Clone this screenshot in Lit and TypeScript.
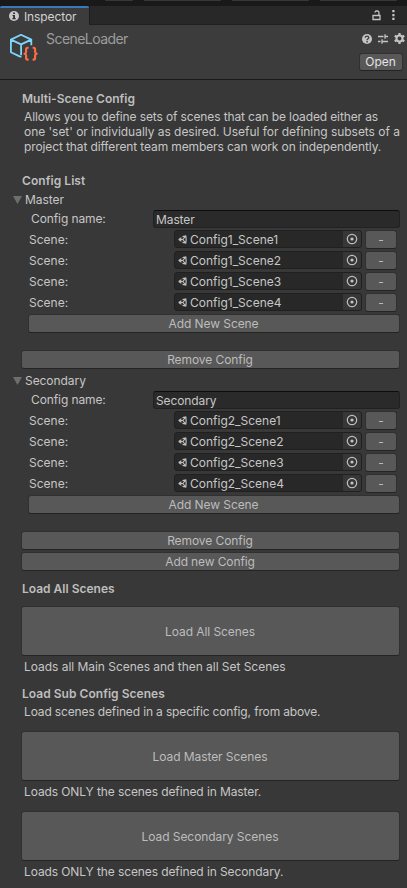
import { LitElement, html, css, svg } from "lit";
import { customElement, property } from "lit/decorators.js";

const infoIcon = html`<svg width="10" height="10" viewBox="0 0 10 10"><circle cx="5" cy="5" r="5" fill="#c8c8c8"/><path d="M4.1 1.6h1.9v1.5H4.1zM3.5 4h2.5v3h.7v1.2H3.4V7h.7V5.1h-.6z" fill="#333"/></svg>`;

const lockIcon = html`<svg width="9" height="11" viewBox="0 0 9 11"><path d="M1 5.5h7v4H1zM6.9 5.3V2.6Q6.9 1 5.4 1H4.5Q3 1 3 2.6" fill="none" stroke="#c4c4c4" stroke-width="1.3"/></svg>`;

const dotsIcon = html`<svg width="3" height="10" viewBox="0 0 3 10"><path d="M.3 0h2.2v2.2H.3zM.3 4h2.2v2.2H.3zM.3 7.8h2.2V10H.3z" fill="#c8c8c8"/></svg>`;

const helpIcon = html`<svg width="10" height="10" viewBox="0 0 10 10"><circle cx="5" cy="5" r="5" fill="#c4c4c4"/><path d="M3.2 3.8Q3.3 2.2 5 2.2T6.8 3.7C6.8 4.8 5.1 4.8 5.1 6.2" fill="none" stroke="#3c3c3c" stroke-width="1.3"/><path d="M4.4 7.1h1.4v1.3H4.4z" fill="#3c3c3c"/></svg>`;

const presetIcon = html`<svg width="10" height="10" viewBox="0 0 10 10"><path d="M0 2.5h5.5M7 2.5h3M7 .3v4.4M0 7.5h2.5M4.5 7.5H10M4 5.3v4.4" fill="none" stroke="#c4c4c4" stroke-width="1.3"/></svg>`;

const gearIcon = html`<svg width="11" height="11" viewBox="0 0 11 11"><circle cx="5.5" cy="5.5" r="3" fill="none" stroke="#c4c4c4" stroke-width="2"/>${[0, 60, 120].map(
  (a) => svg`<path d="M4.4 0h2.2v2.4H4.4zM4.4 8.6h2.2V11H4.4z" fill="#c4c4c4" transform="rotate(${a} 5.5 5.5)"/>`
)}</svg>`;

const assetIcon = html`<svg width="32" height="31" viewBox="0 0 32 31"><g fill="none" stroke-linejoin="round"><path d="M13.4 26L11.6 25.4 2.9 21.2V8.6L13 3.8l10.3 4.8v5.6M2.9 8.6l10.2 4.8 10.2-4.8M13.1 13.4v10.8" stroke="#7fd6fd" stroke-width="1.8"/><path d="M20.6 16.8h-1q-1.5 0-1.5 1.5v2.6q0 1.3-1.6 1.8 1.6.5 1.6 1.8v2.6q0 1.5 1.5 1.5h1M24.6 16.8h1q1.5 0 1.5 1.5v2.6q0 1.3 1.6 1.8-1.6.5-1.6 1.8v2.6q0 1.5-1.5 1.5h-1" stroke="#ff6e40" stroke-width="2.1"/></g></svg>`;

const sceneIcon = html`<svg width="9" height="9" viewBox="0 0 9 9"><path d="M.8 4.5L3.4 2.7M.8 4.5L3.4 6.3M.5 4.5H4.8M4.8 4.5L7.4 1.4M4.8 4.5L7.4 7.6M4.5 1.6L7.8.9 8.1 3.6M4.5 7.4L7.8 8.1 8.1 5.4M8.1 3.4v2.2" fill="none" stroke="#c0c0c0" stroke-width="1.15"/></svg>`;

const pickerIcon = html`<svg width="12" height="12" viewBox="0 0 12 12"><circle cx="6" cy="6" r="4.7" fill="none" stroke="#bdbdbd" stroke-width="1.2"/><circle cx="6" cy="6" r="1.6" fill="#c4c4c4"/></svg>`;

@customElement("unity-button")
class UnityButton extends LitElement {
  static styles = css`
    :host {
      display: flex;
      box-sizing: border-box;
      height: 19px;
      align-items: center;
      justify-content: center;
      padding-right: 1px;
      background: #585858;
      border: 1px solid #303030;
      border-bottom-color: #242424;
      border-radius: 3px;
      color: #bcbcbc;
      line-height: 15px;
      letter-spacing: -0.07px;
    }
  `;
  render() {
    return html`<slot></slot>`;
  }
}

@customElement("scene-row")
class SceneRow extends LitElement {
  @property() name = "";
  static styles = css`
    :host {
      display: grid;
      grid-template-columns: 145px 188px 35px;
      height: 19px;
      margin-bottom: 2px;
    }
    .label { line-height: 19px; }
    .field {
      display: flex;
      box-sizing: border-box;
      height: 18px;
      align-items: center;
      background: #282828;
      border: 1px solid #202020;
      border-radius: 3px;
      padding-left: 3px;
      overflow: hidden;
    }
    .name { flex: 1; padding-left: 3px; line-height: 18px; margin-top: 1px; }
    .pick {
      display: flex;
      width: 18px;
      height: 16px;
      align-items: center;
      justify-content: center;
      background: #373737;
    }
    .remove { margin-left: 3px; padding-right: 0; }
    svg { display: block; }
  `;
  render() {
    return html`
      <span class="label">Scene:</span>
      <div class="field">
        ${sceneIcon}<span class="name">${this.name}</span><span class="pick">${pickerIcon}</span>
      </div>
      <unity-button class="remove">-</unity-button>
    `;
  }
}

@customElement("config-group")
class ConfigGroup extends LitElement {
  @property() name = "";
  @property({ attribute: false }) scenes: string[] = [];
  static styles = css`
    :host { display: block; }
    .fold { display: flex; align-items: flex-start; height: 17px; padding-top: 1px; margin-left: 13px; gap: 3px; letter-spacing: -0.06px; }
    .fold svg { display: block; margin-top: 4px; }
    .config {
      display: grid;
      grid-template-columns: 122px 247px;
      margin: 1px 0 2px 31px;
      height: 18px;
      line-height: 17px;
      letter-spacing: -0.1px;
    }
    .input {
      box-sizing: border-box;
      height: 18px;
      padding-left: 2px;
      background: #2a2a2a;
      border: 1px solid #212121;
      border-top-color: #0d0d0d;
      border-radius: 3px;
    }
    .scenes { margin-left: 28px; width: 372px; }
    .scenes scene-row { margin-left: 1px; }
    .remove { margin: 17px 7px 0 21px; }
  `;
  render() {
    return html`
      <div class="fold">
        <svg width="9" height="8" viewBox="0 0 9 8"><path d="M0 0h9L4.5 8z" fill="#6e6e6e"/></svg>
        <span>${this.name}</span>
      </div>
      <div class="config"><span>Config name:</span><div class="input">${this.name}</div></div>
      <div class="scenes">
        ${this.scenes.map((s) => html`<scene-row .name=${s}></scene-row>`)}
        <unity-button>Add New Scene</unity-button>
      </div>
      <unity-button class="remove">Remove Config</unity-button>
    `;
  }
}

@customElement("app-root")
class AppRoot extends LitElement {
  static styles = css`
    :host {
      display: block;
      box-sizing: border-box;
      width: 407px;
      height: 888px;
      overflow: hidden;
      background: #383838;
      color: #c6c6c6;
      font: 12px/15px Inter, "Liberation Sans", sans-serif;
    }
    svg { display: block; }
    .toolbar { display: flex; height: 6px; background: #191919; padding-left: 105px; gap: 11px; }
    .stub { height: 1px; width: 77px; background: #383838; border-radius: 0 0 2px 2px; }
    .stub.small { width: 28px; }
    .tabs {
      display: flex;
      box-sizing: border-box;
      height: 19px;
      background: #282828;
      border-bottom: 1px solid #202020;
    }
    .tab {
      display: flex;
      box-sizing: border-box;
      width: 89px;
      height: 19px;
      align-items: flex-start;
      gap: 5px;
      padding: 1px 0 0 9px;
      background: #3c3c3c;
      border-top: 2px solid #3a79bb;
      border-radius: 2px 2px 0 0;
      color: #d2d2d2;
      letter-spacing: -0.1px;
    }
    .tab svg { margin-top: 2px; }
    .edge { width: 1px; background: #1c1c1c; }
    .tools { display: flex; flex: 1; justify-content: flex-end; align-items: center; gap: 11px; padding-right: 12px; }
    .header {
      display: flex;
      box-sizing: border-box;
      height: 55px;
      background: #3c3c3c;
      border-bottom: 1px solid #1a1a1a;
    }
    .asset { padding: 6px 0 0 8px; width: 46px; box-sizing: border-box; }
    .title { flex: 1; font-size: 14px; line-height: 17px; padding-top: 5px; color: #9c9c9c; letter-spacing: -0.55px; }
    .side { display: flex; flex-direction: column; align-items: flex-end; }
    .icons { display: flex; gap: 6px; align-items: center; padding: 8px 2px 0 0; height: 11px; }
    .open { width: 44px; margin: 9px 4px 0 0; color: #e4e4e4; height: 18px; padding-bottom: 1px; }
    .heading { font-weight: 600; color: #bebebe; padding-left: 22px; height: 15px; }
    .text { padding-left: 24px; letter-spacing: -0.1px; }
    .intro { margin-top: 11px; }
    .about { margin: 3px 0 19px; }
    .about div { white-space: nowrap; }
    .about .first { letter-spacing: -0.125px; }
    .about .last { letter-spacing: -0.115px; }
    .about .middle, .loose { letter-spacing: -0.035px; }
    .specific { letter-spacing: -0.145px; }
    .list { margin-bottom: 3px; letter-spacing: 0.06px; }
    .wide { margin: 2px 7px 0 21px; letter-spacing: -0.12px; }
    .big { height: 50px; padding-top: 1px; margin: 0 7px 3px 21px; }
    .all { margin: 10px 0; }
    .sub { margin: 12px 0 3px; letter-spacing: 0.03px; }
    .pad { margin-bottom: 12px; }
    .second { margin-top: 3px; }
  `;
  render() {
    const scenes = (n: number) => [1, 2, 3, 4].map((i) => `Config${n}_Scene${i}`);
    return html`
      <div class="toolbar">
        <div class="stub small"></div><div class="stub"></div><div class="stub"></div><div class="stub"></div>
      </div>
      <div class="tabs">
        <div class="tab">${infoIcon}<span>Inspector</span></div>
        <div class="edge"></div>
        <div class="tools">${lockIcon}${dotsIcon}</div>
      </div>
      <div class="header">
        <div class="asset">${assetIcon}</div>
        <div class="title">SceneLoader</div>
        <div class="side">
          <div class="icons">${helpIcon}${presetIcon}${gearIcon}</div>
          <unity-button class="open">Open</unity-button>
        </div>
      </div>
      <div class="heading intro">Multi-Scene Config</div>
      <div class="text about">
        <div class="first">Allows you to define sets of scenes that can be loaded either as</div>
        <div class="middle">one 'set' or individually as desired. Useful for defining subsets of a</div>
        <div class="last">project that different team members can work on independently.</div>
      </div>
      <div class="heading list">Config List</div>
      <config-group .name=${"Master"} .scenes=${scenes(1)}></config-group>
      <config-group class="second" .name=${"Secondary"} .scenes=${scenes(2)}></config-group>
      <unity-button class="wide">Add new Config</unity-button>
      <div class="heading all">Load All Scenes</div>
      <unity-button class="big">Load All Scenes</unity-button>
      <div class="text loose">Loads all Main Scenes and then all Set Scenes</div>
      <div class="heading sub">Load Sub Config Scenes</div>
      <div class="text pad specific">Load scenes defined in a specific config, from above.</div>
      <unity-button class="big">Load Master Scenes</unity-button>
      <div class="text pad">Loads ONLY the scenes defined in Master.</div>
      <unity-button class="big">Load Secondary Scenes</unity-button>
      <div class="text">Loads ONLY the scenes defined in Secondary.</div>
    `;
  }
}
